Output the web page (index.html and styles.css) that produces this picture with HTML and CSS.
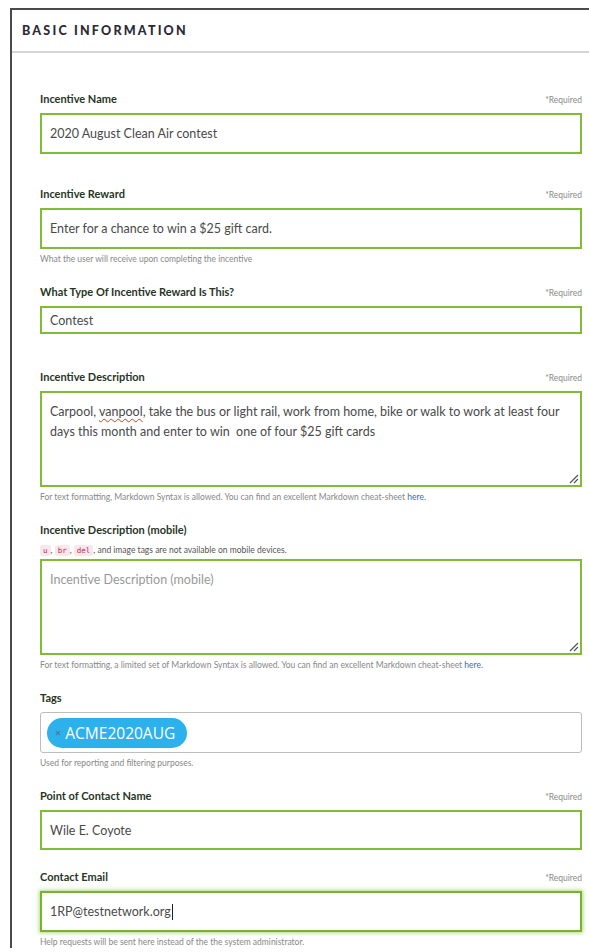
FILE: index.html
```html
<!DOCTYPE html>
<html lang="en">
<head>
<meta charset="utf-8">
<title>Basic Information</title>
<link rel="stylesheet" href="styles.css">
</head>
<body>
<section class="panel">
  <header class="panel-head">
    <h2>BASIC INFORMATION</h2>
  </header>
  <div class="panel-body">

    <div class="field field-first">
      <div class="label-row"><label>Incentive Name</label><span class="req">*Required</span></div>
      <div class="input">2020 August Clean Air contest</div>
    </div>

    <div class="field">
      <div class="label-row"><label>Incentive Reward</label><span class="req">*Required</span></div>
      <div class="input">Enter for a chance to win a $25 gift card.</div>
      <p class="help">What the user will receive upon completing the incentive</p>
    </div>

    <div class="field field-select">
      <div class="label-row"><label>What Type Of Incentive Reward Is This?</label><span class="req">*Required</span></div>
      <div class="input input-short">Contest</div>
    </div>

    <div class="field">
      <div class="label-row"><label>Incentive Description</label><span class="req">*Required</span></div>
      <div class="input textarea"><p class="ta-text">Carpool, <span class="misspelt">vanpool</span>, take the bus or light rail, work from home, bike or walk to work at least four days this month and enter to win&nbsp; one of four $25 gift cards</p><svg class="grip" width="12" height="12" viewBox="0 0 12 12"><path d="M11 3 L3 11 M11 7 L7 11" stroke="#555" stroke-width="1.2" fill="none"/></svg></div>
      <p class="help">For text formatting, Markdown Syntax is allowed. You can find an excellent Markdown cheat-sheet <a href="#">here.</a></p>
    </div>

    <div class="field">
      <div class="label-row"><label>Incentive Description (mobile)</label></div>
      <p class="note"><code>u</code>, <code>br</code>, <code>del</code>, and image tags are not available on mobile devices.</p>
      <div class="input textarea placeholder"><p class="ta-text">Incentive Description (mobile)</p><svg class="grip" width="12" height="12" viewBox="0 0 12 12"><path d="M11 3 L3 11 M11 7 L7 11" stroke="#555" stroke-width="1.2" fill="none"/></svg></div>
      <p class="help">For text formatting, a limited set of Markdown Syntax is allowed. You can find an excellent Markdown cheat-sheet <a href="#">here.</a></p>
    </div>

    <div class="field">
      <div class="label-row"><label>Tags</label></div>
      <div class="tagbox">
        <span class="chip"><span class="chip-x">×</span>ACME2020AUG</span>
      </div>
      <p class="help">Used for reporting and filtering purposes.</p>
    </div>

    <div class="field field-tight">
      <div class="label-row"><label>Point of Contact Name</label><span class="req">*Required</span></div>
      <div class="input input-poc">Wile E. Coyote</div>
    </div>

    <div class="field">
      <div class="label-row"><label>Contact Email</label><span class="req">*Required</span></div>
      <div class="input focused">1RP@testnetwork.org<span class="caret"></span></div>
      <p class="help">Help requests will be sent here instead of the the system administrator.</p>
    </div>

  </div>
</section>
</body>
</html>
```
FILE: styles.css
```css
html, body {
  margin: 0;
  padding: 0;
  background: #fff;
  overflow: hidden;
}

body {
  font-family: Lato, "Open Sans", sans-serif;
  color: #333;
  width: 589px;
  height: 952px;
}

.panel {
  margin: 8px 0 0 10px;
  border-top: 2px solid #4a4a4a;
  border-left: 2px solid #4a4a4a;
  background: #fff;
}

.panel-head {
  height: 41px;
  display: flex;
  align-items: center;
  padding-left: 10px;
  border-bottom: 2px solid #d4d4d4;
}

.panel-head h2 {
  margin: 0;
  font-size: 12.5px;
  font-weight: 900;
  letter-spacing: 2.2px;
  color: #2b2a36;
}

.panel-body {
  padding: 39px 7px 0 28px;
}

.field {
  margin-bottom: 20px;
}

.field-first {
  margin-bottom: 33px;
}

.field-select {
  margin-bottom: 36px;
}

.field-tight {
  margin-bottom: 20px;
}

.label-row {
  display: flex;
  justify-content: space-between;
  align-items: baseline;
  height: 14px;
  margin-bottom: 7px;
}

.label-row label {
  font-size: 11px;
  font-weight: 700;
  color: #28361f;
  line-height: 14px;
}

.req {
  font-size: 8.5px;
  color: #8a8a8a;
}

.input {
  position: relative;
  box-sizing: border-box;
  height: 41px;
  border: 2px solid #82bb36;
  padding: 0 8px;
  display: flex;
  align-items: center;
  font-size: 12.5px;
  color: #4a4a4a;
}

.input-short {
  height: 28px;
}

.input-poc {
  height: 40px;
}

.textarea {
  display: block;
  height: 96px;
  padding-top: 9px;
  line-height: 20px;
}

.ta-text {
  margin: 0;
}

.placeholder {
  color: #999;
}

.misspelt {
  text-decoration: underline wavy #e0302a;
  text-decoration-thickness: 1px;
  text-underline-offset: 2px;
}

.grip {
  position: absolute;
  right: 1px;
  bottom: 1px;
}

.focused {
  border-color: #76b52a;
  box-shadow: 0 0 4px 1px rgba(118, 181, 42, 0.55);
}

.caret {
  display: inline-block;
  width: 1px;
  height: 16px;
  background: #222;
  margin-left: 1px;
}

.help {
  margin: 4px 0 0;
  font-size: 8.5px;
  line-height: 12px;
  color: #888;
}

.help a {
  color: #3d6ea8;
  text-decoration: none;
}

.note {
  margin: -1px 0 1px;
  font-size: 8.5px;
  line-height: 14px;
  color: #555;
}

.note code {
  font-family: "DejaVu Sans Mono", monospace;
  font-size: 7.5px;
  color: #c7254e;
  background: #f7e8ee;
  border-radius: 2px;
  padding: 1px 3px;
}

.tagbox {
  box-sizing: border-box;
  height: 41px;
  border: 1px solid #bdbdbd;
  border-radius: 3px;
  padding: 0 6px;
  display: flex;
  align-items: center;
}

.chip {
  display: inline-flex;
  align-items: center;
  height: 30px;
  padding: 0 12px 0 8px;
  border-radius: 15px;
  background: #2cb1ec;
  color: #fff;
  font-size: 15.5px;
  font-family: "Open Sans", Lato, sans-serif;
}

.chip-x {
  color: #5a6f7a;
  font-size: 11px;
  margin-right: 4px;
}
```
